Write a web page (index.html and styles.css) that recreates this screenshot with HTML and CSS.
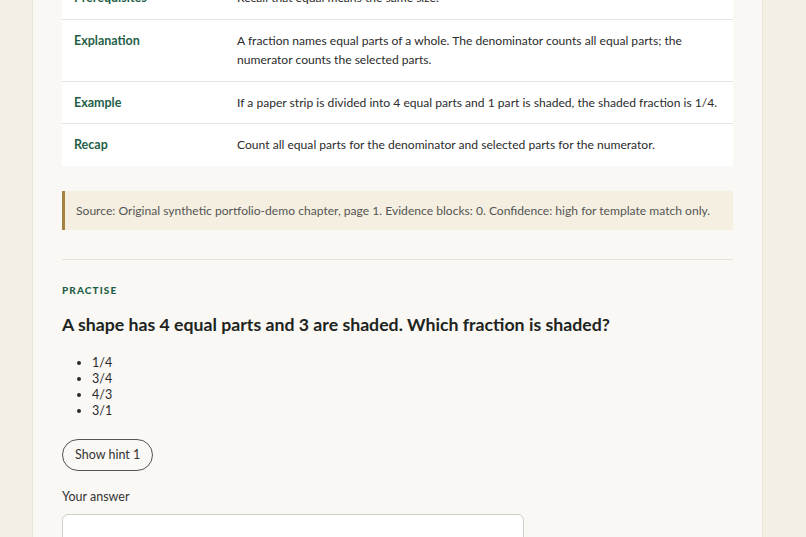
FILE: index.html
```html
<!DOCTYPE html>
<html lang="en">
<head>
<meta charset="utf-8">
<title>Fractions chapter</title>
<link rel="stylesheet" href="styles.css">
</head>
<body>
<div class="page">
  <main class="card">
    <table class="lesson">
      <tr><th>Prerequisites</th><td>Recall that equal means the same size.</td></tr>
      <tr><th>Explanation</th><td>A fraction names equal parts of a whole. The denominator counts all equal parts; the numerator counts the selected parts.</td></tr>
      <tr><th>Example</th><td>If a paper strip is divided into 4 equal parts and 1 part is shaded, the shaded fraction is 1/4.</td></tr>
      <tr><th>Recap</th><td>Count all equal parts for the denominator and selected parts for the numerator.</td></tr>
    </table>
    <p class="source">Source: Original synthetic portfolio-demo chapter, page 1. Evidence blocks: 0. Confidence: high for template match only.</p>
    <hr class="divider">
    <section class="practise">
      <p class="eyebrow">Practise</p>
      <h2 class="question">A shape has 4 equal parts and 3 are shaded. Which fraction is shaded?</h2>
      <ul class="options">
        <li>1/4</li>
        <li>3/4</li>
        <li>4/3</li>
        <li>3/1</li>
      </ul>
      <button class="hint" type="button">Show hint 1</button>
      <label class="answer-label" for="answer">Your answer</label>
      <textarea id="answer" class="answer"></textarea>
    </section>
  </main>
</div>
</body>
</html>
```
FILE: styles.css
```css
html, body {
  margin: 0;
  padding: 0;
  background: #f3efe5;
  font-family: Lato, "Noto Sans", sans-serif;
  color: #2b2b2b;
}
.page {
  padding: 0 43px 0 32px;
}
.card {
  margin-top: -53px;
  background: #f9f8f4;
  border: 1px solid #e9e4d8;
  padding: 29px 29px 40px;
}
.lesson {
  width: 100%;
  border-collapse: collapse;
  background: #ffffff;
  font-size: 12.1px;
  line-height: 19.5px;
}
.lesson tr + tr th, .lesson tr + tr td {
  border-top: 1px solid #e4e4e2;
}
.lesson th {
  width: 151px;
  text-align: left;
  vertical-align: top;
  color: #1f5f48;
  font-weight: 700;
  font-size: 12.5px;
  padding: 11px 12px;
}
.lesson td {
  padding: 11px 12px 11px 0;
  vertical-align: top;
}
.source {
  margin: 25px 0 0;
  background: #f4efe0;
  border-left: 3px solid #a3823f;
  padding: 10px 12px 9.5px 11px;
  font-size: 12.1px;
  line-height: 19.5px;
  color: #555;
}
.divider {
  border: 0;
  border-top: 1px solid #e6e2da;
  margin: 29px 0 0;
}
.eyebrow {
  margin: 23px 0 0;
  font-size: 10px;
  line-height: 14px;
  font-weight: 900;
  letter-spacing: 1.1px;
  text-transform: uppercase;
  color: #1f5f48;
}
.question {
  margin: 15px 0 0;
  font-size: 17.7px;
  line-height: 26px;
  font-weight: 700;
  color: #1d2420;
}
.options {
  margin: 17px 0 0;
  padding-left: 30px;
  font-size: 12.5px;
  line-height: 16px;
}
.hint {
  display: block;
  margin-top: 20px;
  height: 32px;
  padding: 0 12px;
  border: 1px solid #555;
  border-radius: 16px;
  background: transparent;
  font-family: inherit;
  font-size: 12.5px;
  color: #333;
}
.answer-label {
  display: block;
  margin-top: 17px;
  font-size: 12.5px;
  line-height: 18px;
  color: #333;
}
.answer {
  display: block;
  margin-top: 8px;
  width: 462px;
  height: 60px;
  box-sizing: border-box;
  border: 1px solid #cfcfcc;
  border-radius: 6px;
  background: #fff;
  resize: none;
}
```
